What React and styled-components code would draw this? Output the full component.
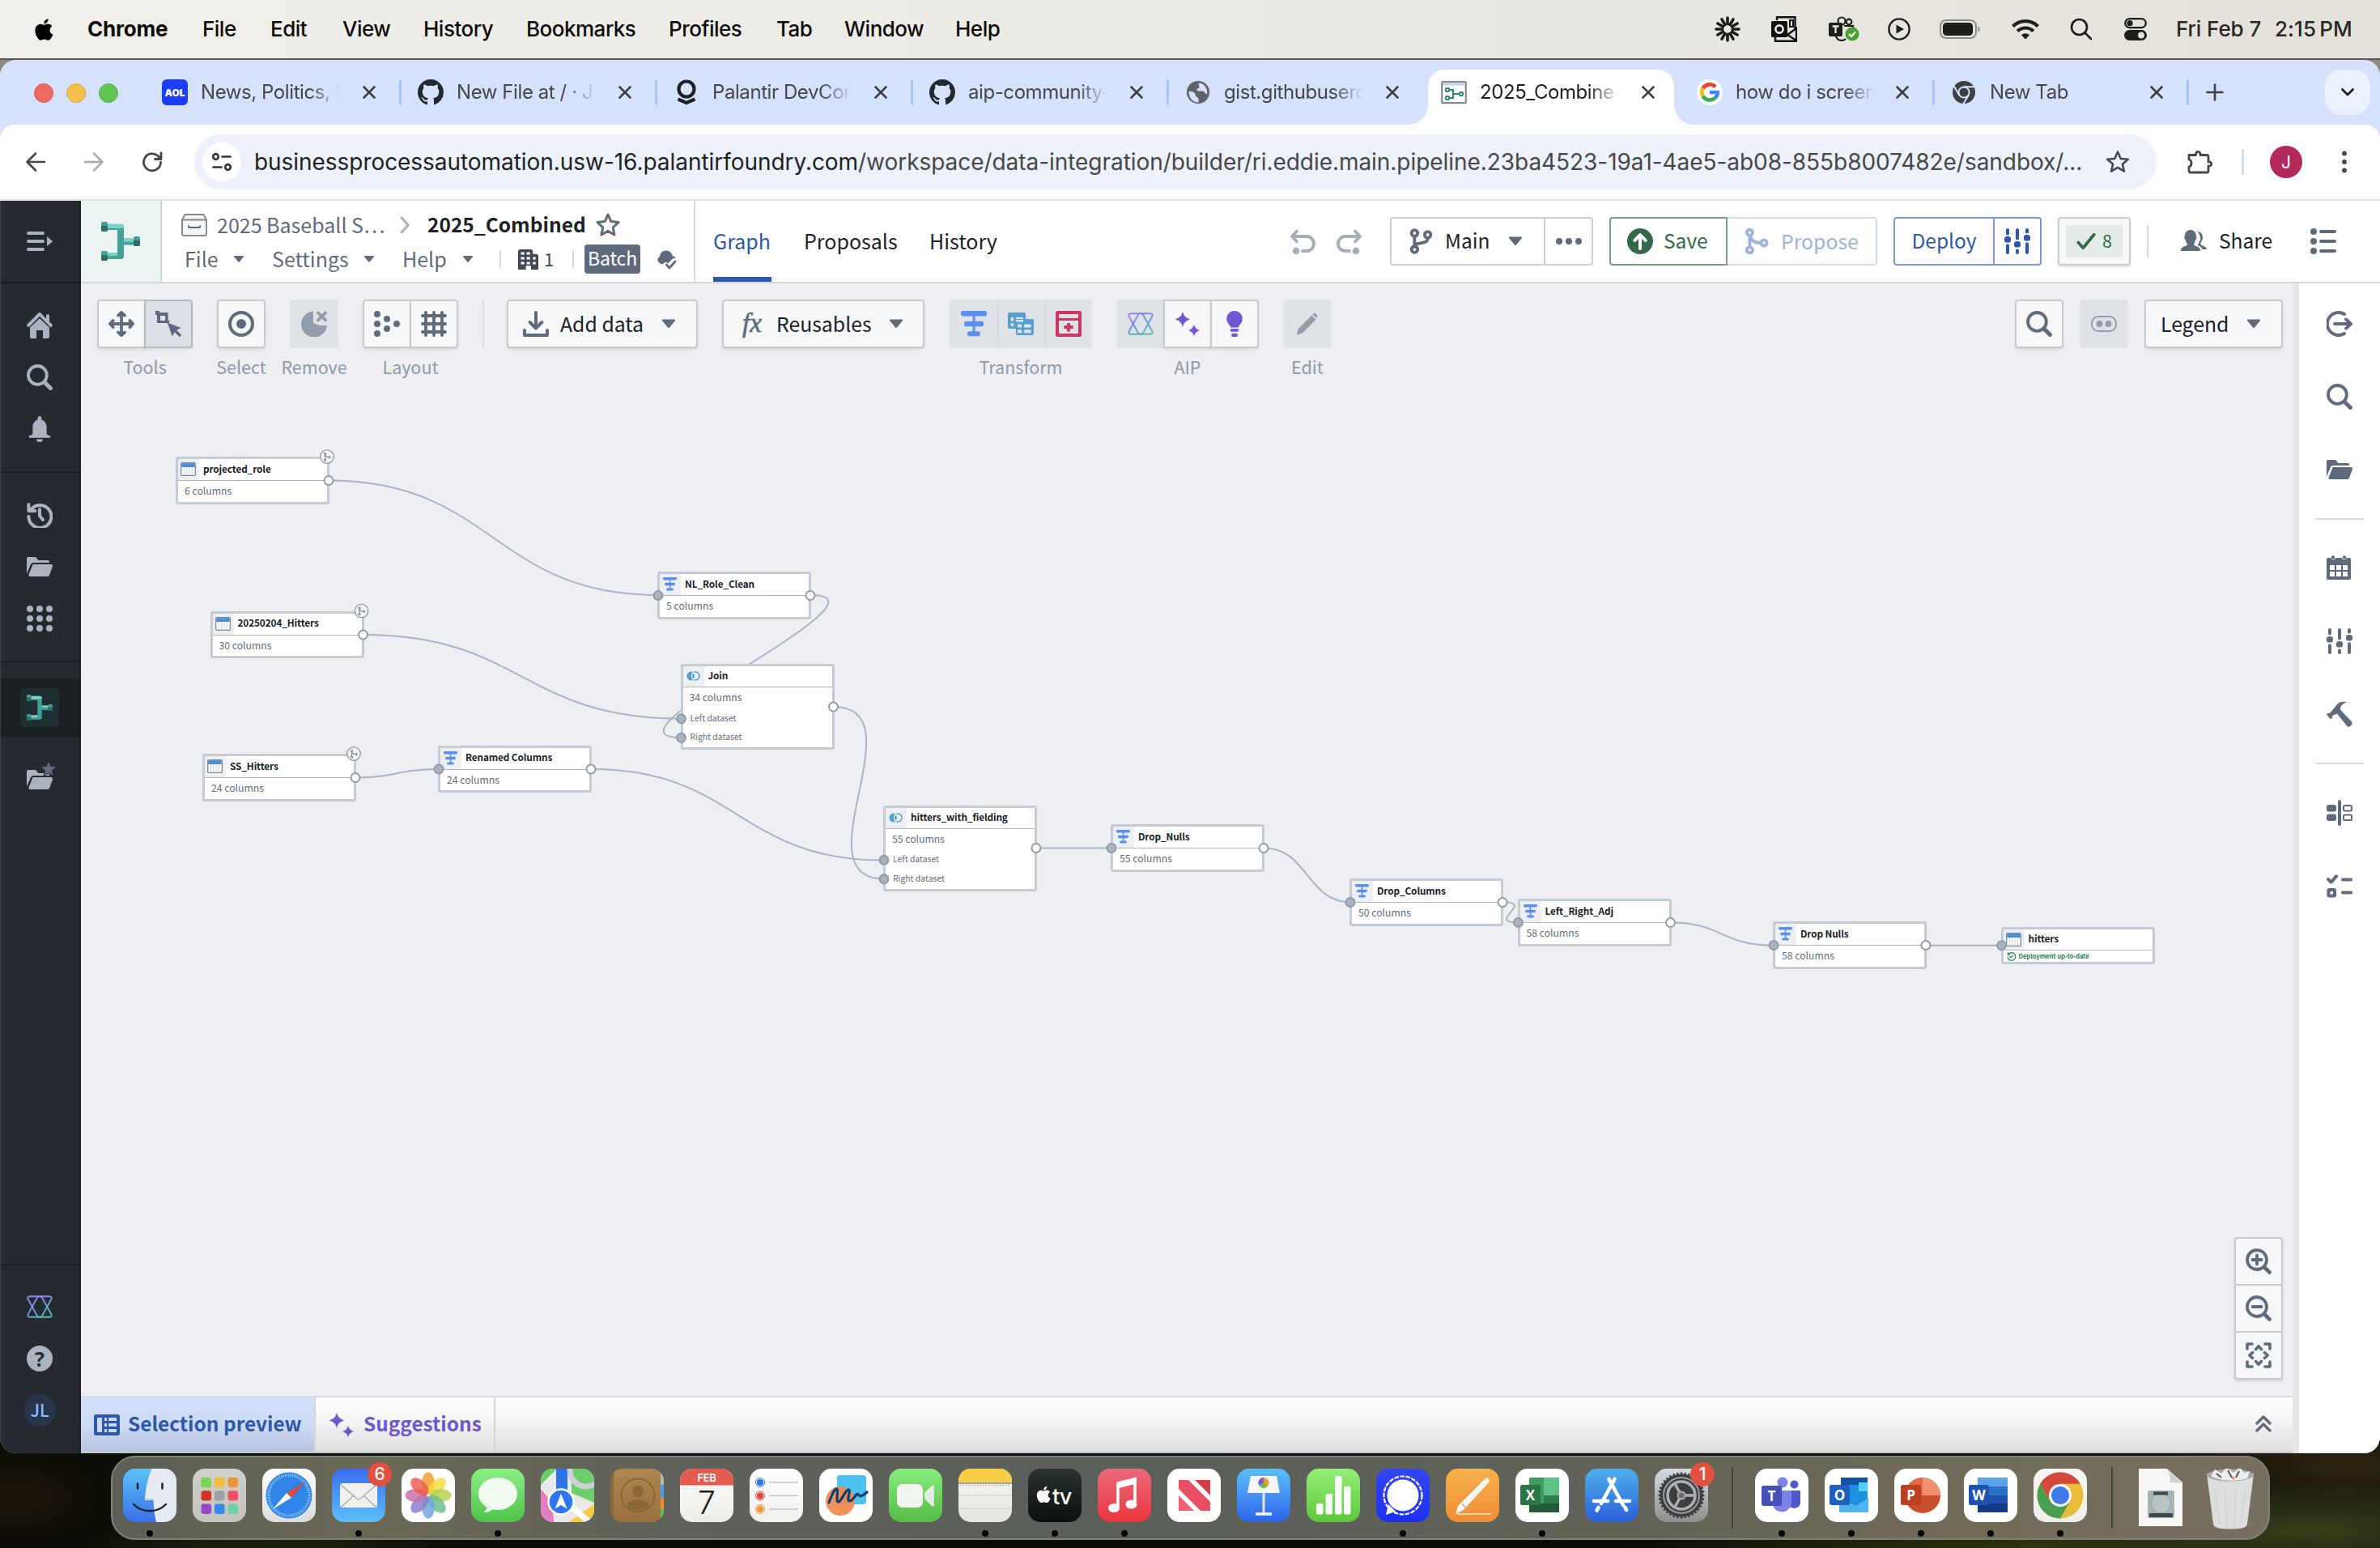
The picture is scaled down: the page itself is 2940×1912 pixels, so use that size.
import React from "react";
import styled, { createGlobalStyle, css } from "styled-components";

const UI = `"Noto Sans CJK JP", "Noto Sans", sans-serif`;
const MAC = `Inter, Roboto, sans-serif`;

const Global = createGlobalStyle`
  *, *::before, *::after { box-sizing: border-box; }
  html, body { margin: 0; padding: 0; background: #0c0e08; }
  body { width: 2940px; height: 1912px; overflow: hidden; font-family: ${UI}; }
  svg { display: block; flex: none; }
`;

/* ---------- layout primitives ---------- */
const Desktop = styled.div`
  width: 2940px;
  height: 1912px;
  display: flex;
  flex-direction: column;
  background:
    radial-gradient(ellipse 420px 60px at 2860px 1890px, #363f1c 0%, rgba(54, 63, 28, 0) 100%),
    radial-gradient(ellipse 260px 80px at 2900px 1810px, #2e2412 0%, rgba(46, 36, 18, 0) 100%),
    radial-gradient(ellipse 500px 40px at 2500px 1912px, #33330f 0%, rgba(51, 51, 15, 0) 100%),
    radial-gradient(ellipse 140px 70px at 20px 1850px, #1d1309 0%, rgba(29, 19, 9, 0) 100%),
    radial-gradient(ellipse 260px 40px at 330px 1912px, #1d240d 0%, rgba(29, 36, 13, 0) 100%),
    linear-gradient(#a29a8b 0px, #8a8578 110px, #0c0e08 300px, #0b0d07 1912px);
`;
const Slot = styled.div`
  flex: none;
  width: ${(p) => p.$w}px;
  display: flex;
  align-items: center;
  justify-content: ${(p) => (p.$center ? "center" : "flex-start")};
  white-space: nowrap;
`;
const Label = styled.span`
  white-space: nowrap;
  font-size: ${(p) => p.$size || 24}px;
  font-weight: ${(p) => p.$weight || 400};
  letter-spacing: ${(p) => p.$ls || 0}px;
  color: ${(p) => p.$color || "#1c2127"};
  line-height: 1.3;
  padding-bottom: ${(p) => p.$lift ?? 0.1}em;
`;

/* ---------- menu bar ---------- */
const MenuBar = styled.header`
  flex: none;
  height: 74px;
  padding: 0 0 1px 41px;
  display: flex;
  align-items: center;
  font-family: ${MAC};
  background: linear-gradient(90deg, #f0efe9, #ebeae4 50%, #e4e1da);
  border-bottom: 2px solid #55555a;
`;
const MenuSpacer = styled.div`
  flex: 1;
`;
const MenuText = styled.span`
  font-size: 26px;
  line-height: 34px;
  font-weight: ${(p) => (p.$bold ? 700 : 500)};
  letter-spacing: ${(p) => p.$ls ?? -0.45}px;
  word-spacing: ${(p) => p.$ws || 0}px;
  color: ${(p) => p.$color || "#0c0c0c"};
  white-space: nowrap;
`;

/* ---------- browser ---------- */
const Window = styled.main`
  flex: none;
  height: 1721px;
  display: flex;
  flex-direction: column;
  border-radius: 20px;
  overflow: hidden;
  background: #d6e1fc;
`;
const TabStrip = styled.div`
  flex: none;
  height: 80px;
  display: flex;
  align-items: flex-end;
  padding-left: 42px;
  font-family: ${MAC};
  background: #d6e1fc;
`;
const Lights = styled.div`
  width: 142px;
  height: 80px;
  display: flex;
  align-items: center;
  gap: 16px;
`;
const Light = styled.i`
  width: 24px;
  height: 24px;
  border-radius: 50%;
  margin-top: 1px;
  background: ${(p) => p.$c};
  border: 1px solid ${(p) => p.$b};
`;
const TabCell = styled.div`
  flex: none;
  width: ${(p) => p.$w}px;
  height: 68px;
  display: flex;
  align-items: flex-start;
`;
const TabBody = styled.div`
  position: relative;
  flex: 1;
  height: 68px;
  padding: 0 20px 12px 16px;
  display: flex;
  align-items: center;
  justify-content: space-between;
  border-radius: 20px 20px 0 0;
  ${(p) =>
    p.$active &&
    css`
      background: #fff;
      &::before,
      &::after {
        content: "";
        position: absolute;
        bottom: 0;
        width: 24px;
        height: 24px;
      }
      &::before {
        left: -24px;
        background: radial-gradient(circle at 0 0, transparent 23.5px, #fff 24px);
      }
      &::after {
        right: -24px;
        background: radial-gradient(circle at 100% 0, transparent 23.5px, #fff 24px);
      }
    `}
`;
const TabTitle = styled.div`
  flex: 1;
  margin: 0 10px 0 16px;
  white-space: nowrap;
  font-size: 24px;
  line-height: 32px;
  font-weight: 400;
  letter-spacing: ${(p) => p.$ls ?? -0.42}px;
  color: ${(p) => (p.$active ? "#1f1f1f" : "#45474a")};
  mask-image: linear-gradient(90deg, #000 ${(p) => (p.$fade ? 134 : 190)}px, transparent ${(p) => (p.$fade ? 172 : 191)}px);
`;
const TabSep = styled.i`
  width: 3px;
  height: 32px;
  margin: 12px 4px 0 5px;
  border-radius: 2px;
  background: ${(p) => (p.$hide ? "transparent" : "#a8c5f8")};
`;
const PlusCell = styled.div`
  width: 72px;
  height: 68px;
  padding: 0 0 12px 16px;
  display: flex;
  align-items: center;
`;
const TabSearch = styled.div`
  width: 56px;
  height: 56px;
  margin: 0 12px 12px auto;
  border-radius: 20px;
  background: #ebf1fd;
  display: grid;
  place-items: center;
`;
const Toolbar = styled.div`
  flex: none;
  height: 94px;
  padding: 0 0 0 28px;
  display: flex;
  align-items: center;
  background: #fff;
  border-bottom: 2px solid #e0e1e3;
  border-radius: 18px 18px 0 0;
`;
const UrlPill = styled.div`
  width: 2424px;
  height: 68px;
  border-radius: 34px;
  background: #edf1fa;
  display: flex;
  align-items: center;
  padding-left: 10px;
`;
const SiteInfo = styled.div`
  width: 48px;
  height: 48px;
  border-radius: 50%;
  background: #fff;
  display: grid;
  place-items: center;
`;
const UrlText = styled.div`
  width: 2258px;
  margin: 0 28px 0 16px;
  font-family: ${MAC};
  font-size: 28px;
  line-height: 40px;
  letter-spacing: ${(p) => p.$ls}px;
  color: #474747;
  white-space: nowrap;
  b {
    font-weight: 400;
    color: #1f1f1f;
  }
`;
const Avatar = styled.div`
  width: 40px;
  height: 40px;
  border-radius: 50%;
  background: ${(p) => p.$bg};
  color: ${(p) => p.$fg};
  display: grid;
  place-items: center;
  padding-bottom: ${(p) => p.$lift || 0}px;
  font: ${(p) => p.$weight || 400} ${(p) => p.$size}px/1 ${(p) => p.$ff};
`;
const BarSep = styled.i`
  flex: none;
  width: ${(p) => p.$w || 2}px;
  height: ${(p) => p.$h || 20}px;
  background: ${(p) => p.$c || "#d3d6da"};
`;

/* ---------- foundry shell ---------- */
const Shell = styled.div`
  flex: 1;
  display: flex;
  min-height: 0;
`;
const LeftRail = styled.nav`
  flex: none;
  width: 100px;
  display: flex;
  flex-direction: column;
  background: #252a31;
  border-right: 2px solid #1b1f24;
  border-left: 1px solid #3a3f46;
`;
const RailGroup = styled.div`
  padding: ${(p) => p.$pad ?? "20px 0"};
  display: flex;
  flex-direction: column;
  border-bottom: ${(p) => (p.$line ? "2px solid #1a1d21" : "0")};
  flex: ${(p) => (p.$grow ? 1 : "none")};
`;
const RailItem = styled.div`
  height: ${(p) => p.$h || 64}px;
  display: grid;
  place-items: center;
  padding: 0 1px 1px 0;
  background: ${(p) => (p.$active ? "#1b1f24" : "none")};
  margin-bottom: ${(p) => p.$mb || 0}px;
`;
const ActiveTile = styled.div`
  width: 48px;
  height: 48px;
  border-radius: 4px;
  background: #1e2e31;
  display: grid;
  place-items: center;
`;
const HelpBadge = styled.div`
  width: 32px;
  height: 32px;
  border-radius: 50%;
  background: #abb3bf;
  color: #252a31;
  font: 700 25px/32px "Open Sans", sans-serif;
  text-align: center;
`;
const Content = styled.section`
  flex: 1;
  display: flex;
  flex-direction: column;
  min-width: 0;
`;
const AppHeader = styled.div`
  flex: none;
  height: 102px;
  display: flex;
  background: #fff;
  border-bottom: 2px solid #d3d6dc;
`;
const AppLogo = styled.div`
  width: 100px;
  display: grid;
  place-items: center;
  background: #ebf4f3;
  border-right: 2px solid #bfded9;
`;
const TitleBlock = styled.div`
  width: 659px;
  padding: 10px 0 0 24px;
  border-right: 2px solid #d9dce0;
`;
const TitleRow = styled.div`
  height: 40px;
  margin-bottom: 2px;
  padding-left: ${(p) => p.$pl || 0}px;
  display: flex;
  align-items: center;
`;
const Batch = styled.div`
  width: 72px;
  height: 36px;
  border-radius: 4px;
  background: #5f6b7c;
  display: grid;
  place-items: center;
`;
const NavTabs = styled.div`
  display: flex;
  padding-left: 22px;
`;
const NavTab = styled.div`
  height: 100px;
  margin-right: 40px;
  width: ${(p) => p.$w}px;
  display: flex;
  align-items: center;
  padding-top: 6px;
  border-bottom: 6px solid ${(p) => (p.$active ? "#2d57a8" : "transparent")};
`;
const HeaderActions = styled.div`
  margin-left: auto;
  padding-right: 54px;
  display: flex;
  align-items: center;
`;
const Group = styled.div`
  display: flex;
  margin-right: ${(p) => p.$mr ?? 20}px;
`;
const OutlineButton = styled.div`
  height: 60px;
  width: ${(p) => p.$w}px;
  padding-left: ${(p) => p.$pl || 0}px;
  display: flex;
  align-items: center;
  justify-content: ${(p) => (p.$pl ? "flex-start" : "center")};
  border: 2px solid ${(p) => p.$c};
  border-left-width: ${(p) => (p.$joined ? 0 : 2)}px;
  border-radius: ${(p) => p.$r || "4px"};
`;
const StatusButton = styled.div`
  width: 90px;
  height: 60px;
  border: 2px solid #c9cbcf;
  border-radius: 4px;
  background: #f6f7f9;
  box-shadow: 0 2px 3px rgba(17, 20, 24, 0.1);
  display: grid;
  place-items: center;
`;
const StatusTag = styled.div`
  width: 70px;
  height: 40px;
  border-radius: 4px;
  background: #e4ebe8;
  display: flex;
  align-items: center;
  justify-content: center;
  gap: 8px;
`;

/* ---------- work area ---------- */
const WorkArea = styled.div`
  flex: 1;
  display: flex;
  min-height: 0;
`;
const Main = styled.div`
  flex: 1;
  display: flex;
  flex-direction: column;
  min-width: 0;
`;
const Canvas = styled.div`
  flex: 1;
  position: relative;
  background: #edeff2;
`;
const CanvasBar = styled.div`
  display: flex;
  align-items: flex-start;
  padding: 20px 12px 0 20px;
`;
const ToolGroup = styled.div`
  display: flex;
  flex-direction: column;
  align-items: center;
  flex: none;
  width: ${(p) => p.$w}px;
  margin-right: ${(p) => p.$mr ?? 30}px;
`;
const ToolButtons = styled.div`
  display: flex;
  margin-bottom: 9px;
`;
const ToolButton = styled.div`
  width: ${(p) => p.$w || 60}px;
  height: 60px;
  display: flex;
  align-items: center;
  justify-content: ${(p) => (p.$pl ? "flex-start" : "center")};
  padding-left: ${(p) => p.$pl || 0}px;
  margin-left: ${(p) => (p.$join ? -2 : 0)}px;
  border: 2px solid ${(p) => (p.$off ? "transparent" : p.$pressed ? "#b4b7bd" : "#c8cacd")};
  background: ${(p) => (p.$off ? "#dfe2e7" : p.$pressed ? "#dcdfe5" : "#f6f7f9")};
  border-radius: ${(p) => p.$r || "4px"};
  box-shadow: ${(p) => (p.$off ? "none" : "0 2px 3px rgba(17, 20, 24, 0.1)")};
  ${(p) => p.$offJoin && "border-left: 2px solid #d8dbe1; margin-left: 0;"}
`;
const FxGlyph = styled.span`
  font: italic 400 33px/40px "Liberation Serif", serif;
  color: #5f6b7c;
  -webkit-text-stroke: 0.7px #5f6b7c;
  padding: 0 0 3px 5px;
`;
const Graph = styled.div`
  position: absolute;
  inset: 0;
`;
const EdgeLayer = styled.svg`
  position: absolute;
  inset: 0;
`;
const NodeCard = styled.div`
  position: absolute;
  left: ${(p) => p.$x}px;
  top: ${(p) => p.$y}px;
  width: 190px;
  height: ${(p) => p.$h}px;
  border: 3px solid #c5cbd3;
  border-radius: 3px;
  background: #fff;
`;
const NodeHead = styled.div`
  height: ${(p) => (p.$short ? 26 : 27)}px;
  display: flex;
  align-items: center;
  border-bottom: 1px solid #aeb6c2;
`;
const NodeIcon = styled.div`
  width: 26px;
  height: 100%;
  margin-right: 5px;
  padding: 0 1px 1px 0;
  background: #edeff2;
  display: grid;
  place-items: center;
`;
const NodeBody = styled.div`
  height: 26px;
  padding: 2px 0 0 8px;
  display: flex;
  align-items: center;
`;
const NodePort = styled.div`
  height: 23.6px;
  padding-left: 9px;
  display: flex;
  align-items: center;
`;
const NodeStatus = styled.div`
  height: 14px;
  padding: 1px 0 0 4px;
  display: flex;
  align-items: center;
  gap: 4px;
`;
const ZoomStack = styled.div`
  position: absolute;
  right: 12px;
  bottom: 20px;
  width: 60px;
  border: 2px solid #c8cacd;
  border-radius: 4px;
  background: #f6f7f9;
  box-shadow: 0 2px 3px rgba(17, 20, 24, 0.12);
`;
const ZoomCell = styled.div`
  height: 56px;
  display: grid;
  place-items: center;
  & + & {
    height: 58px;
    border-top: 2px solid #c8cacd;
  }
`;
const BottomBar = styled.div`
  flex: none;
  height: 71px;
  display: flex;
  border-top: 2px solid #d9dce1;
  border-bottom: 2px solid #c4c7cc;
  background: linear-gradient(#fefefe, #f4f4f4 45%, #dedede);
`;
const BottomTab = styled.div`
  width: ${(p) => p.$w}px;
  padding-left: 16px;
  display: flex;
  align-items: center;
  gap: ${(p) => p.$gap}px;
  border-right: 2px solid #d3d5da;
  background: ${(p) => (p.$active ? "linear-gradient(#d1e0fb, #cddbf5 50%, #b7c5de)" : "none")};
`;
const Collapse = styled.div`
  margin: 0 24px 0 auto;
  padding-bottom: 3px;
  display: flex;
  align-items: center;
`;
const Gutter = styled.i`
  flex: none;
  width: 8px;
  background: #e2e6eb;
`;
const RightRail = styled.aside`
  flex: none;
  width: 100px;
  padding-top: 5px;
  background: #fff;
  display: flex;
  flex-direction: column;
  align-items: center;
`;
const RightItem = styled.div`
  height: 90px;
  display: grid;
  place-items: center;
`;
const RightLine = styled.i`
  width: 60px;
  height: 2px;
  margin: 15px 0;
  background: #dcdcde;
`;

/* ---------- dock ---------- */
const DockBar = styled.footer`
  flex: none;
  width: 2667px;
  height: 104px;
  margin: 3px 0 0 137px;
  padding: 14px 0 0 13px;
  display: flex;
  align-items: flex-start;
  border-radius: 30px;
  border: 2px solid #7d8076;
  background: linear-gradient(90deg, #5c5f55, #6b6857 12%, #5d615a 28%, #5a5f58 50%, #626358 70%, #706a59 85%, #777060);
`;
const DockItem = styled.div`
  position: relative;
  flex: none;
  width: 66px;
  margin-right: ${(p) => p.$mr ?? 20}px;
  display: flex;
  flex-direction: column;
  align-items: center;
`;
const DockDot = styled.i`
  width: 8px;
  height: 8px;
  margin-top: 10px;
  border-radius: 50%;
  background: #000;
`;
const DockBadge = styled.span`
  position: absolute;
  right: -8px;
  top: -8px;
  width: 30px;
  height: 30px;
  border-radius: 50%;
  background: #e2503f;
  color: #fff;
  font: 500 21px/30px ${MAC};
  text-align: center;
`;
const DockSep = styled.i`
  flex: none;
  width: 2px;
  height: 76px;
  margin: -2px ${(p) => p.$mr}px 0 ${(p) => p.$ml}px;
  background: #45443a;
`;

/* ---------- icons on a 16 unit grid ---------- */
const Ic = ({ s = 32, c = "#5f6b7c", children, vb = "0 0 16 16", w, h }) => (
  <svg width={w || s} height={h || s} viewBox={vb} fill={c} stroke="none">
    {children}
  </svg>
);
const St = ({ w = 2, c = "#5f6b7c", children, s, vb, ww, hh }) => (
  <Ic s={s} vb={vb} w={ww} h={hh} c="none">
    <g stroke={c} strokeWidth={w} strokeLinecap="round" strokeLinejoin="round" fill="none">
      {children}
    </g>
  </Ic>
);
const Caret = ({ c, small }) => (
  <Ic c={c} vb="-16 -16 32 32">
    <path d="M-7-5.500h14c1 0 1.400 1 .8 1.700L1 4.600a1.400 1.400 0 0 1-2 0L-7.800-3.800c-.6-.7-.2-1.700.8-1.700z" transform={small ? "scale(.74)" : "scale(1)"} />
  </Ic>
);
const SearchIcon = ({ c, s }) => (
  <St c={c} s={s} w={1.9}>
    <circle cx="6.700" cy="6.700" r="5.700" />
    <path d="M11.200 11.200l3.500 3.500" strokeWidth="2.500" />
  </St>
);
const Folder = ({ c }) => (
  <Ic c={c}>
    <path d="M0 12.300V3c0-.55.45-1 1-1h4c.3 0 .6.1.8.3L7.200 4H13c.55 0 1 .45 1 1v.5H4.200c-.8 0-1.500.5-1.800 1.200L0 12.300zM15 6.500H4.500c-.5 0-.9.300-1 .7L1.200 13c-.1.600.3 1 .9 1h10.900c.500 0 .900-.300 1-.700l2-5.600c.100-.600-.400-1.200-1-1.200z" />
  </Ic>
);
const Sliders = ({ c, s }) => (
  <Ic c={c} s={s}>
    <rect x="1" y="0" width="2" height="4.200" rx="1" /><rect x="0" y="5" width="4" height="3.800" rx="1.600" /><rect x="1" y="9.600" width="2" height="6.400" rx="1" />
    <rect x="7" y="0" width="2" height="7.200" rx="1" /><rect x="6" y="8" width="4" height="3.800" rx="1.600" /><rect x="7" y="12.700" width="2" height="3.300" rx="1" />
    <rect x="13" y="0" width="2" height="3.200" rx="1" /><rect x="12" y="4" width="4" height="3.800" rx="1.600" /><rect x="13" y="8.600" width="2" height="7.400" rx="1" />
  </Ic>
);
const Pipeline = ({ s = 48 }) => (
  <Ic s={s} vb="0 0 48 48" c="#43a196">
    <path d="M4 3h20a4 4 0 0 1 4 4v35a4 4 0 0 1-4 4H4v-7h16V10H4z" />
    <path d="M8 2.500h17a3 3 0 0 1 3 3V8H8zM8 38h12v4H8zM28 20h12v4.500H28z" fill="#7dd1c5" />
    <path d="M28 24.500h12V28.500H28z" />
    <rect width="8" height="12" rx="2" /><path d="M0 5h8v5a2 2 0 0 1-2 2H2a2 2 0 0 1-2-2z" fill="#2f6f68" />
    <rect y="36" width="8" height="12" rx="2" /><path d="M0 41h8v5a2 2 0 0 1-2 2H2a2 2 0 0 1-2-2z" fill="#2f6f68" />
    <rect x="40" y="18" width="8" height="12" rx="2" /><path d="M40 23h8v5a2 2 0 0 1-2 2h-4a2 2 0 0 1-2-2z" fill="#2f6f68" />
  </Ic>
);
const Aip = ({ dark }) => (
  <svg width="32" height="28" viewBox="0 0 32 28">
    <defs>
      <linearGradient id={dark ? "aipD" : "aipL"} gradientUnits="userSpaceOnUse" x1="6" y1="0" x2="24" y2="28">
        <stop offset="0" stopColor="#9b84f0" />
        <stop offset=".5" stopColor="#6f94dd" />
        <stop offset="1" stopColor="#4fc2a8" />
      </linearGradient>
    </defs>
    <g fill="none" stroke={`url(#${dark ? "aipD" : "aipL"})`} strokeWidth="1.900" strokeLinejoin="round">
      <path d="M4 1.200h24c2.300 0 3.400 1.700 2.300 3.600L19.200 25c-1.400 2.400-5 2.400-6.400 0L1.700 4.800C.6 2.900 1.700 1.200 4 1.200z" />
      <path d="M4 26.800h24c2.300 0 3.400-1.700 2.300-3.600L19.200 3c-1.400-2.400-5-2.400-6.400 0L1.700 23.200c-1.100 1.900 0 3.600 2.300 3.600z" />
    </g>
  </svg>
);
const Sparkle = ({ c = "#7157d1" }) => (
  <Ic c={c}>
    <path d="M5 .3c.5 2.600 1.700 4 4.600 4.900C6.700 6.100 5.500 7.500 5 10.100 4.500 7.500 3.300 6.100.3 5.200 3.300 4.300 4.500 2.900 5 .3z" />
    <path d="M12 8.200c.4 2 1.400 3.100 3.700 3.800-2.300.7-3.300 1.800-3.700 3.800-.4-2-1.400-3.100-3.700-3.800 2.300-.7 3.300-1.800 3.700-3.800z" />
  </Ic>
);
const TransformIcon = ({ s = 32 }) => (
  <Ic s={s} c="#5a8ff0">
    <rect x="0" y="0" width="16" height="3.200" rx="1.300" /><rect x="2" y="6.400" width="12" height="3.200" rx="1.300" />
    <rect x="4" y="12.600" width="8" height="3" rx="1.300" /><rect x="7.300" y="1" width="1.500" height="13" />
  </Ic>
);
const TableIcon = () => (
  <svg width="19" height="17" viewBox="0 0 19 17">
    <rect x=".7" y=".7" width="17.600" height="15.600" rx="1" fill="#fff" stroke="#7d8590" strokeWidth="1.300" />
    <rect x="1.300" y="1.200" width="16.400" height="4.800" fill="#4690d6" />
    <path d="M4.700 6v10M7.900 6v10M11.100 6v10M14.300 6v10" stroke="#c3ccd6" strokeWidth=".9" />
  </svg>
);
const JoinIcon = () => (
  <svg width="17" height="12" viewBox="0 0 17 12">
    <circle cx="6" cy="6" r="5.500" fill="#4f9fd3" />
    <circle cx="11" cy="6" r="5" fill="#edeff2" stroke="#4f9fd3" strokeWidth="1.500" />
    <path d="M8.500 1.300a6.500 6.500 0 0 1 0 9.400 6.500 6.500 0 0 1 0-9.400z" fill="#4f9fd3" stroke="#edeff2" strokeWidth="1.200" />
  </svg>
);
const Apple = ({ s = 30, c = "#000" }) => (
  <svg width={s * 0.87} height={s} viewBox="0 0 27 32" fill={c}>
    <path d="M22.500 17c0-3.300 2.700-4.900 2.800-5-1.500-2.200-3.900-2.500-4.700-2.600-2-.2-3.900 1.200-4.900 1.200s-2.600-1.200-4.200-1.100c-2.200 0-4.200 1.300-5.300 3.200-2.300 3.900-.6 9.700 1.600 12.900 1.100 1.600 2.400 3.300 4.100 3.200 1.600-.1 2.300-1.100 4.200-1.100s2.500 1.100 4.300 1c1.800 0 2.900-1.600 4-3.100 1.300-1.800 1.800-3.600 1.800-3.700-.1 0-3.700-1.400-3.700-4.900zM19.300 7.500c.9-1.100 1.500-2.600 1.300-4.100-1.300.1-2.800.9-3.700 1.900-.8.900-1.500 2.500-1.300 3.900 1.400.1 2.800-.7 3.700-1.700z" transform="translate(-3.500 -1.300) scale(1.110)" />
  </svg>
);
const Cross = () => (
  <St s={24} c="#3c3f43" w={2.6} vb="0 0 24 24"><path d="M5.500 5.500l13 13M18.500 5.500l-13 13" /></St>
);
const Github = () => (
  <Ic c="#24292f">
    <path d="M8 0C3.580 0 0 3.580 0 8c0 3.540 2.290 6.530 5.470 7.590.4.070.55-.17.55-.38 0-.19-.01-.82-.01-1.490-2.010.37-2.530-.49-2.690-.94-.09-.23-.48-.94-.82-1.130-.28-.15-.68-.52-.01-.53.63-.01 1.080.58 1.230.82.72 1.210 1.870.87 2.330.66.07-.52.28-.87.51-1.070-1.780-.2-3.640-.89-3.640-3.950 0-.87.31-1.590.82-2.150-.08-.2-.36-1.020.08-2.120 0 0 .67-.21 2.200.82.64-.18 1.320-.27 2-.27s1.360.09 2 .27c1.530-1.040 2.200-.82 2.200-.82.44 1.100.16 1.920.08 2.120.51.56.82 1.270.82 2.150 0 3.070-1.870 3.750-3.650 3.950.29.25.54.73.54 1.480 0 1.070-.01 1.930-.01 2.200 0 .21.15.46.55.38A8.010 8.010 0 0 0 16 8c0-4.420-3.580-8-8-8z" />
  </Ic>
);
const Branch = ({ c }) => (
  <St c={c} w={1.9}>
    <circle cx="4.200" cy="3" r="1.900" /><circle cx="4.200" cy="13" r="1.900" /><circle cx="12.300" cy="4" r="1.900" />
    <path d="M4.200 5v6M12.300 6c0 2.600-2 2.800-4 3.100-2 .3-4 .4-4 2.400" />
  </St>
);
const Merge = ({ c, w = 1.9, s }) => (
  <St c={c} w={w} s={s}>
    <circle cx="4.200" cy="2.600" r="1.800" /><circle cx="4.200" cy="13.400" r="1.800" /><circle cx="13" cy="9" r="1.800" />
    <path d="M4.200 4.500v7M4.500 5c.6 2.600 2.500 4 6.600 4" />
  </St>
);

const tabs = [
  { t: "News, Politics, S", fade: true, icon: (
    <svg width="32" height="32"><rect width="32" height="32" rx="6" fill="#1a3df5" /><text x="16" y="20.500" textAnchor="middle" fontFamily="Inter" fontWeight="900" fontSize="12" fill="#fff">AOL</text></svg>
  ) },
  { t: "New File at / · J", fade: true, icon: <Github /> },
  { t: "Palantir DevCor", fade: true, icon: (
    <St s={32} c="#1e2124" w={4.2} vb="0 0 32 32"><circle cx="16" cy="12" r="9.500" /><path d="M5.500 24.500L16 29l10.500-4.500" strokeLinecap="butt" strokeLinejoin="miter" /></St>
  ) },
  { t: "aip-community-", fade: true, icon: <Github /> },
  { t: "gist.githubuserc", fade: true, icon: (
    <svg width="32" height="32" viewBox="0 0 32 32"><circle cx="16" cy="16" r="14" fill="#5f6368" /><path d="M4.500 14.500c4 .5 8 1 8 4.500 0 3 4 2.500 4 5.500v4c-6 .5-12.500-5-12-14zM17 4.500c-1 3 1 3.500.5 5.500-.5 1.500-3 1-3 3s4 1.500 7 1.500 2 3.500 5.500 3.500c1.500-7-4-13.500-10-13.500z" fill="#d6e1fc" /></svg>
  ) },
  { t: "2025_Combine", fade: true, active: true, icon: (
    <svg width="32" height="32" viewBox="0 0 32 32"><rect x="1.200" y="3.200" width="29.600" height="26" rx="1.500" fill="#fff" stroke="#858a8f" strokeWidth="2.200" /><path d="M2 4.500h28v3H2z" fill="#c9d4da" /><g fill="none" stroke="#2f8478" strokeWidth="2"><rect x="6" y="11" width="4" height="4" rx="1" /><rect x="6" y="21" width="4" height="4" rx="1" /><rect x="23" y="16" width="4" height="4" rx="1" /><path d="M10 13h5v10h-5M15 18h8" /></g></svg>
  ) },
  { t: "how do i screen", fade: true, w: 314, icon: (
    <svg width="32" height="32" viewBox="0 0 32 32"><circle cx="16" cy="16" r="16" fill="#fff" /><g fill="none" strokeWidth="4.600"><path d="M23 9.300A9.700 9.700 0 0 0 7.600 11.200" stroke="#ea4335" /><path d="M7.600 11.200a9.700 9.700 0 0 0 0 9.600" stroke="#fbbc05" /><path d="M7.600 20.800A9.700 9.700 0 0 0 22.500 23" stroke="#34a853" /><path d="M22.500 23.100c2.200-1.900 3.200-4.200 3.200-7.100h-9.700" stroke="#4285f4" /></g></svg>
  ) },
  { t: "New Tab", w: 314, icon: (
    <svg width="32" height="32" viewBox="0 0 32 32"><circle cx="16" cy="16" r="14" fill="#3c4043" /><circle cx="16" cy="16" r="6.600" fill="none" stroke="#d6e1fc" strokeWidth="2" /><path d="M16 9.300h13M10.300 19.500L3.800 8.500M21.700 19.500L15.200 30.500" stroke="#d6e1fc" strokeWidth="2" /></svg>
  ) },
];

const nodes = [
  { x: 217, y: 564, t: "projected_role", c: "6 columns", k: "table", tag: 1, out: 1 },
  { x: 812, y: 706, t: "NL_Role_Clean", c: "5 columns", k: "tr", in: 1, out: 1 },
  { x: 259.5, y: 754.5, t: "20250204_Hitters", c: "30 columns", k: "table", tag: 1, out: 1 },
  { x: 840.5, y: 820, t: "Join", c: "34 columns", k: "join" },
  { x: 250, y: 931, t: "SS_Hitters", c: "24 columns", k: "table", tag: 1, out: 1 },
  { x: 541, y: 920.5, t: "Renamed Columns", c: "24 columns", k: "tr", in: 1, out: 1 },
  { x: 1091, y: 994.5, t: "hitters_with_fielding", c: "55 columns", k: "join" },
  { x: 1372, y: 1018, t: "Drop_Nulls", c: "55 columns", k: "tr", in: 1, out: 1 },
  { x: 1667, y: 1085, t: "Drop_Columns", c: "50 columns", k: "tr", in: 1, out: 1 },
  { x: 1874.5, y: 1110, t: "Left_Right_Adj", c: "58 columns", k: "tr", in: 1, out: 1 },
  { x: 2190, y: 1138, t: "Drop Nulls", c: "58 columns", k: "tr", in: 1, out: 1 },
  { x: 2471.5, y: 1145, t: "hitters", k: "out", in: 1 },
];
const edges = [
  [406, 593.5, 813, 735, 203], [448, 784, 842, 887.7, 197], [1001, 735, 842, 911.3, 118],
  [439, 960.5, 542, 950, 51], [730, 950, 1092, 1062.6, 181], [1030, 873, 1092, 1085.6, 106],
  [1280, 1047.4, 1373, 1047.4, 40], [1562, 1047.4, 1668, 1114.3, 53], [1856, 1114.3, 1876, 1139.5, 42],
  [2064, 1139.5, 2190, 1167.7, 63], [2379, 1167.7, 2473, 1167.7, 40],
];
const ports = [];
nodes.forEach((n) => {
  const join = n.k === "join";
  const my = n.k === "out" ? n.y + 22.7 : n.y + 29.5;
  if (join) {
    ports.push([n.x + 189, n.y + 53, 0], [n.x + 1, n.y + 67.7, 1], [n.x + 1, n.y + 91.3, 1]);
  } else {
    if (n.out) ports.push([n.x + 189, my, 0]);
    if (n.in) ports.push([n.x + 1, my, 1]);
  }
});

const GraphView = () => (
  <Graph>
    <EdgeLayer width="2732" height="1373" viewBox="100 350 2732 1373">
      {edges.map(([a, b, c, d, k]) => (
        <path key={a} d={`M${a} ${b}C${a + k} ${b} ${c - k} ${d} ${c} ${d}`} fill="none" stroke="#abb3bf" strokeWidth="2" />
      ))}
    </EdgeLayer>
    {nodes.map((n) => (
      <NodeCard key={n.x} $x={n.x - 100} $y={n.y - 350} $h={n.k === "join" ? 106 : n.k === "out" ? 46 : 58.5}>
        <NodeHead $short={n.k === "join" || n.k === "out"}>
          <NodeIcon>
            {n.k === "tr" ? <TransformIcon s={17} /> : n.k === "join" ? <JoinIcon /> : <TableIcon />}
          </NodeIcon>
          <Label $size={11.8} $weight={700} $color="#1c2127" $ls={-0.12} $lift={0.28}>{n.t}</Label>
        </NodeHead>
        {n.k === "out" ? (
          <NodeStatus>
            <St s={11} c="#238551" w={1.8}><path d="M3 3.500A7 7 0 1 1 1.500 9M2 1v3.500h3.500M5.500 8l2 2 3-4" /></St>
            <Label $size={7.8} $weight={700} $color="#238551" $ls={-0.12}>Deployment up-to-date</Label>
          </NodeStatus>
        ) : (
          <NodeBody><Label $size={12.2} $color="#5f6b7c">{n.c}</Label></NodeBody>
        )}
        {n.k === "join" && (
          <>
            <NodePort><Label $size={10.4} $color="#5f6b7c">Left dataset</Label></NodePort>
            <NodePort><Label $size={10.4} $color="#5f6b7c">Right dataset</Label></NodePort>
          </>
        )}
      </NodeCard>
    ))}
    <EdgeLayer width="2732" height="1373" viewBox="100 350 2732 1373">
      {ports.map(([x, y, f]) => (
        <circle key={`${x}-${y}`} cx={x} cy={y} r="5.500" fill={f ? "#abb3bf" : "#fff"} stroke="#8f99a8" strokeWidth="1.900" />
      ))}
      {nodes.filter((n) => n.tag).map((n) => (
        <g key={n.x} transform={`translate(${n.x + 187} ${n.y})`} fill="none" stroke="#7d8796" strokeWidth="1.100">
          <circle r="8.300" fill="#f3f4f6" />
          <circle cx="-2.500" cy="-3.500" r="1.100" /><circle cx="-2.500" cy="4" r="1.100" /><circle cx="3" cy=".7" r="1.100" />
          <path d="M-2.500-2.400v5.300M-2.300-2c.5 1.600 1.600 2.600 4.200 2.700" />
        </g>
      ))}
    </EdgeLayer>
  </Graph>
);

/* ---------- dock artwork ---------- */
const Tile = ({ id, a, b, children }) => (
  <svg width="66" height="66" viewBox="0 0 66 66">
    <defs>
      <linearGradient id={id} x1="0" y1="0" x2="0" y2="1"><stop offset="0" stopColor={a} /><stop offset="1" stopColor={b || a} /></linearGradient>
      <clipPath id={`${id}c`}><rect width="66" height="66" rx="15" /></clipPath>
    </defs>
    <g clipPath={`url(#${id}c)`}>
      <rect width="66" height="66" fill={`url(#${id})`} />
      {children}
    </g>
  </svg>
);
const OfficeLetter = ({ c, t }) => (
  <>
    <rect x="6" y="20" width="25" height="25" rx="2.500" fill={c} />
    <text x="18.500" y="39" textAnchor="middle" fontFamily="Open Sans" fontWeight="700" fontSize="17" fill="#fff">{t}</text>
  </>
);
const petals = ["#f39a2d", "#f3dc3b", "#b5d24a", "#6bbf8a", "#6aa5df", "#8a79c4", "#c66fa8", "#ee5a4a"];
const gear = Array.from({ length: 36 }, (_, i) => i * 10);

const dock = [
  [<Tile id="finder" a="#5cc3f7" b="#3b6fe8"><path d="M36 0c-5 12-8 24-8.500 37.500h10C37.500 48 39 58 41 66h25V0z" fill="#e6ebf2" /><path d="M18 18.500v6M48.500 18.500v6" stroke="#1d2630" strokeWidth="2.600" strokeLinecap="round" /><path d="M36 0c-5 12-8 24-8.500 38.500h10" fill="none" stroke="#dfe5ee" strokeWidth="1" /><path d="M13 44c11 11 29 11 40 0" fill="none" stroke="#16202b" strokeWidth="2.400" strokeLinecap="round" /></Tile>, 1],
  [<Tile id="launch" a="#cfcfcb" b="#c4c3bd">{["#77d64f", "#f5bd39", "#ee9635", "#cf3428", "#9aa2a6", "#ef5067", "#9746c5", "#3488ef", "#6ccfa2"].map((c, i) => <rect key={c} x={10.5 + (i % 3) * 16.5} y={11 + Math.floor(i / 3) * 16.3} width="12.500" height="12.300" rx="3" fill={c} />)}</Tile>],
  [<Tile id="safari" a="#ffffff" b="#dcdcdc"><circle cx="33" cy="33" r="28.500" fill="#2f86e8" /><circle cx="33" cy="33" r="25" fill="none" stroke="#bfe0fa" strokeWidth="3.500" strokeDasharray=".7 1.500" /><path d="M54 16L30 30l6 6z" fill="#e5473c" /><path d="M13 50l17-20 6 6z" fill="#f4f4f4" /></Tile>],
  [<Tile id="mail" a="#3a6df0" b="#5cc0f8"><rect x="10" y="18" width="46" height="30" rx="3.500" fill="#f0f0ef" /><path d="M11 20l20 17c1.500 1.200 2.500 1.200 4 0l20-17M12 47l15-14M54 47L39 33" fill="none" stroke="#a9a9a9" strokeWidth="1.400" /></Tile>, 1, "6"],
  [<Tile id="photos" a="#fdfdfd">{petals.map((c, i) => <ellipse key={c} cx="33" cy="18" rx="8" ry="13.500" fill={c} opacity=".82" transform={`rotate(${i * 45} 33 33)`} />)}</Tile>],
  [<Tile id="messages" a="#8bef84" b="#4fc24a"><ellipse cx="33" cy="31" rx="24" ry="20" fill="#f1fbf0" /><path d="M20 44c0 5-2 8-5 10 6 0 10-2 13-5z" fill="#e8f6e6" /></Tile>, 1],
  [<Tile id="maps" a="#e9e9ec"><path d="M0 0h20L0 20zM38 0h28v42L38 30z" fill="#6dcf6c" /><path d="M0 26c10 8 16 22 16 40H0z" fill="#e17fc0" /><path d="M66 44L34 66h32z" fill="#f5cb41" /><path d="M19 0h14v34H19z" fill="#2f73e8" /><path d="M28 34l38 32h-12L24 40z" fill="#fff" /><circle cx="56" cy="2" r="20" fill="none" stroke="#d0d1d8" strokeWidth="7" /><circle cx="25" cy="41" r="15.500" fill="#2f76ee" stroke="#fff" strokeWidth="2.400" /><path d="M25 31l7.500 18.500L25 45l-7.500 4.500z" fill="#fff" /></Tile>],
  [<Tile id="contacts" a="#ad8650" b="#9a7040"><rect x="62" width="4" height="66" fill="#b9b9b4" /><rect x="62" y="20" width="4" height="16" fill="#4d9be8" /><rect x="62" y="36" width="4" height="14" fill="#ef8a2f" /><rect x="62" y="50" width="4" height="16" fill="#5cbf5a" /><g fill="none" stroke="#80602f" strokeWidth="1.600"><circle cx="34" cy="33" r="20.500" /></g><circle cx="34" cy="28" r="7.500" fill="#8a6735" /><path d="M20 46c2-11 26-11 28 0a20 20 0 0 1-28 0z" fill="#8a6735" /><rect width="4" height="66" fill="#8d6839" /></Tile>],
  [<Tile id="cal" a="#fbfbfa" b="#eeede9"><rect width="66" height="20.500" fill="#e45c4f" /><text x="33" y="16" textAnchor="middle" fontFamily="Inter" fontWeight="600" fontSize="13" fill="#fff" letterSpacing="-.3">FEB</text><text x="33" y="55.500" textAnchor="middle" fontFamily="Inter" fontWeight="300" fontSize="39" fill="#1e1e1e">7</text></Tile>],
  [<Tile id="remind" a="#ffffff" b="#f1f0ee">{["#2f76ee", "#e5473c", "#f0942c"].map((c, i) => <g key={c}><circle cx="13" cy={17 + i * 16.5} r="4" fill={c} /><circle cx="13" cy={17 + i * 16.5} r="5.500" fill="none" stroke={c} strokeWidth="1" /><path d={`M24 ${17 + i * 16.5}h36`} stroke="#c4c4c4" strokeWidth="1.600" /></g>)}</Tile>],
  [<Tile id="free" a="#ffffff"><rect x="22" y="8" width="36" height="36" rx="4" fill="#4cc3f2" /><circle cx="26" cy="40" r="18" fill="#f08a4e" opacity=".92" /><path d="M12 42c3-8 6-16 9-17 4-1-2 17 3 16 4-1 8-15 12-15 4 1-3 13 1 14 4 0 6-5 9-8 2-2 3 2 5 2 3-1 5-2 8-5" fill="none" stroke="#143d6b" strokeWidth="3.200" strokeLinecap="round" /></Tile>],
  [<Tile id="facetime" a="#86ec7c" b="#58bb48"><rect x="10" y="19" width="32" height="29" rx="7" fill="#f1f5f0" /><path d="M44 30l9-9c1.500-1.300 2.800-.6 2.800 1v23c0 1.600-1.300 2.300-2.800 1l-9-9z" fill="#e4ede2" /></Tile>],
  [<Tile id="notes" a="#f8f7f4" b="#e6e4e0"><rect width="66" height="17" fill="#f7cf45" /><path d="M0 18h66" stroke="#8e8a80" strokeWidth="1.600" /><path d="M2 20.500h62" stroke="#b0ada5" strokeWidth="1.600" strokeDasharray="1.500 2" /><path d="M0 33h66M0 49.500h66" stroke="#d4d3cf" strokeWidth="1.500" /></Tile>, 1],
  [<Tile id="tv" a="#283430" b="#0b0f10"><g transform="translate(9 20)"><Apple s={23} c="#fff" /></g><text x="30" y="43.500" fontFamily="Inter" fontWeight="500" fontSize="27" letterSpacing="-1" fill="#fff">tv</text></Tile>, 1],
  [<Tile id="music" a="#ea6b7d" b="#e8363f"><path d="M25 19.500L46 14v27.500" fill="none" stroke="#fff" strokeWidth="3.600" /><path d="M23.500 16.500L48 10.500v8l-24.500 6z" fill="#fff" /><path d="M25 18v30" stroke="#fff" strokeWidth="3.600" /><ellipse cx="20" cy="48.500" rx="7" ry="5.500" fill="#fff" /><ellipse cx="41.500" cy="44" rx="7" ry="5.500" fill="#fff" /></Tile>, 1],
  [<Tile id="news" a="#ffffff"><path d="M14 14h12l27 27v11H41L14 25z" fill="#e94f63" /><path d="M34 14h19v19z" fill="#d83b4c" /><path d="M14 33v19h19z" fill="#ef6073" /></Tile>],
  [<Tile id="keynote" a="#5bc0f8" b="#2f63e8"><path d="M17 9h32l4 21H13z" fill="#f3f5f7" /><circle cx="33" cy="17.500" r="6.500" fill="#f39a2d" /><path d="M33 11a6.500 6.500 0 0 0-5.500 10l5.500-3.500z" fill="#7a5cd0" /><path d="M27.500 21a6.500 6.500 0 0 0 10 1l-4.500-4.500z" fill="#5cbf5a" /><path d="M33 30v25" stroke="#dfe6ef" strokeWidth="3" /><path d="M23 56h20" stroke="#f3f5f7" strokeWidth="3.500" /></Tile>],
  [<Tile id="numbers" a="#95ef78" b="#5bc83c"><g fill="#f8fff4"><rect x="12" y="43" width="8.500" height="13.500" rx="2" /><rect x="23.500" y="31" width="8.500" height="25.500" rx="2" /><rect x="35" y="9" width="8.500" height="47.500" rx="2" /><rect x="46" y="22" width="8.500" height="34.500" rx="2" /></g></Tile>],
  [<Tile id="signal" a="#3446f0" b="#1c2ff2"><circle cx="33" cy="33" r="23.500" fill="none" stroke="#fff" strokeWidth="2.200" strokeDasharray="5.500 1.600" /><circle cx="33" cy="33" r="19.500" fill="#fff" /><path d="M12 57l3-13 9 9z" fill="#fff" /></Tile>, 1],
  [<Tile id="pages" a="#f6b14c" b="#ef8d36"><path d="M14 56h42" stroke="#fbd7a8" strokeWidth="2" /><path d="M49 12c3-1 6 1 4 5L22 51l-10 5 3-10z" fill="#f7f5f2" /><path d="M20 43l4 5" stroke="#999" strokeWidth="1.200" /></Tile>],
  [<Tile id="excel" a="#ffffff"><rect x="17" y="11" width="37" height="43" rx="2" fill="#3f9d62" /><rect x="35" y="11" width="19" height="22" fill="#5fc389" /><rect x="35" y="33" width="19" height="10" fill="#2f7f4c" /><rect x="17" y="43" width="37" height="11" fill="#245c38" /><OfficeLetter c="#2a7545" t="X" /></Tile>, 1],
  [<Tile id="store" a="#4fb0ee" b="#2a5fd8"><g stroke="#fff" strokeWidth="4.600" strokeLinecap="round"><path d="M36.500 13L20 43M29.500 13L47 45" /><path d="M11 40h17M38 40h17" /><path d="M16.500 48l-2 3.500M49.500 48l1.500 3" /></g></Tile>],
  [<Tile id="settings" a="#d5dde2" b="#8e8e8b"><circle cx="33" cy="33" r="26.500" fill="#3c3e40" />{gear.map((a) => <path key={a} d="M33 4.500v4" stroke="#3c3e40" strokeWidth="2.400" transform={`rotate(${a} 33 33)`} />)}<circle cx="33" cy="33" r="22" fill="none" stroke="#9a9da0" strokeWidth="2" /><circle cx="33" cy="33" r="17" fill="none" stroke="#aeb1b4" strokeWidth="3.500" /><path d="M33 33h17M33 33l-8.500 15M33 33l-8.500-15" stroke="#aeb1b4" strokeWidth="3.500" /><circle cx="33" cy="33" r="4.500" fill="#6a6d70" stroke="#aeb1b4" strokeWidth="2" /></Tile>, 0, "1"],
  "sep",
  [<Tile id="teams" a="#ffffff"><circle cx="34" cy="17" r="6.500" fill="#7b83eb" /><circle cx="48.500" cy="19.500" r="5" fill="#5059c9" /><path d="M38 27h18v14a7.500 7.500 0 0 1-14 4z" fill="#5059c9" /><path d="M20 27h25v15a12 12 0 0 1-22 6z" fill="#7b83eb" /><rect x="8" y="21" width="25" height="25" rx="2.500" fill="#464eb8" /><text x="20.500" y="40" textAnchor="middle" fontFamily="Open Sans" fontWeight="700" fontSize="17" fill="#fff">T</text></Tile>, 1],
  [<Tile id="outlook" a="#ffffff"><rect x="20" y="11" width="33" height="43" rx="2" fill="#1e90df" /><rect x="20" y="11" width="33" height="9" fill="#1253a3" /><rect x="42" y="17" width="11" height="11" fill="#50d1f8" /><path d="M18 54V36l20 10 16-10v16a2 2 0 0 1-2 2z" fill="#4fb3ec" /><OfficeLetter c="#1f5fc0" t="O" /></Tile>, 1],
  [<Tile id="ppt" a="#ffffff"><circle cx="35" cy="33" r="22" fill="#c9502f" /><path d="M35 11a22 22 0 0 1 22 22H35z" fill="#f0906f" /><path d="M35 11a22 22 0 0 0-22 22h22z" fill="#e0694a" /><rect x="8" y="20" width="25" height="25" rx="2.500" fill="#bd3f20" /><text x="20.500" y="39" textAnchor="middle" fontFamily="Open Sans" fontWeight="700" fontSize="17" fill="#fff">P</text></Tile>, 1],
  [<Tile id="word" a="#ffffff"><rect x="17" y="11" width="37" height="43" rx="2" fill="#2b6fcb" /><rect x="17" y="11" width="37" height="11" fill="#5aa2ea" /><rect x="17" y="33" width="37" height="11" fill="#2052b0" /><rect x="17" y="43" width="37" height="11" fill="#173a85" /><OfficeLetter c="#2050b0" t="W" /></Tile>, 1],
  [<Tile id="chrome" a="#f8f7f5" b="#efeeea"><circle cx="33" cy="33" r="28.500" fill="#e8bd3c" /><path d="M33 18.700h24.700A28.500 28.500 0 0 0 8.300 18.700l12.300 21.500z" fill="#d64a3b" /><path d="M8.300 18.700A28.500 28.500 0 0 0 33 61.500l12.400-21.400H20.600z" fill="#4a9e50" /><circle cx="33" cy="33" r="14" fill="#fff" /><circle cx="33" cy="33" r="11" fill="#4279e8" /></Tile>, 1],
  "sep2",
  [<svg width="66" height="74" viewBox="0 0 66 74"><path d="M6 0h35l19 17v54H6z" fill="#f7f7f6" /><path d="M41 0l19 19c-6-2-13-2-15-2 0-6-1-12-4-17z" fill="#cfcfce" /><rect x="17" y="27" width="33" height="34" rx="2" fill="#a9b4b8" /><circle cx="33.500" cy="43" r="12" fill="#b9c3c6" stroke="#93a0a5" strokeWidth="1" /><path d="M24 28.500h18v4H24zM19 55h29v5H19z" fill="#42474a" /></svg>],
  [<svg width="66" height="76" viewBox="0 0 66 76"><path d="M4 6l8 62c.6 4.500 5 6.500 21 6.500S53.400 72.500 54 68l8-62z" fill="#dcdedd" /><path d="M14 24l6 44M27 26l2 46M40 26l-2 46M52 24l-6 44" stroke="#d3d5d4" strokeWidth="2" /><ellipse cx="33" cy="8" rx="29" ry="7.500" fill="#a6a8a7" /><path d="M9 9l5-8 8 5 7-8 8 7 8-7 5 7 7-2-3 9c-12 4-34 4-45-3z" fill="#eceeed" /><path d="M16 6l6 5M30 2l5 9M44 3l-4 8" stroke="#555" strokeWidth="2" /><path d="M35 10l3 3" stroke="#f06a54" strokeWidth="2" /></svg>],
];

export default function App() {
  return (
    <>
      <Global />
      <Desktop>
        <MenuBar>
          <Slot $w={67}><Apple /></Slot>
          <Slot $w={142}><MenuText $bold $ls={-0.2}>Chrome</MenuText></Slot>
          {[["File", 84], ["Edit", 89], ["View", 100], ["History", 127], ["Bookmarks", 176], ["Profiles", 133], ["Tab", 84], ["Window", 137], ["Help", 80]].map(([t, w]) => (
            <Slot key={t} $w={w}><MenuText $ls={-0.5}>{t}</MenuText></Slot>
          ))}
          <MenuSpacer />
          <Slot $w={70}>
            <svg width="32" height="32" viewBox="-16 -16 32 32">
              {Array.from({ length: 12 }, (_, i) => <path key={i} d="M0-6.500V-14" stroke="#1d1d1b" strokeWidth="3.600" strokeLinecap="round" transform={`rotate(${i * 30})`} />)}
              <circle r="6" fill="none" stroke="#1d1d1b" strokeWidth="2" />
            </svg>
          </Slot>
          <Slot $w={71}>
            <svg width="32" height="32" viewBox="0 0 32 32"><path d="M7 5V1.200h22.500V16M5 26v4.800h26V15L18.500 24M18.500 22l12.500 8" fill="none" stroke="#111" strokeWidth="2.400" /><path d="M23 5h4v8h-4z" fill="none" stroke="#111" strokeWidth="2" /><rect x="0" y="6" width="20" height="20" rx="1.500" fill="#111" /><circle cx="10" cy="16" r="4.600" fill="none" stroke="#e7e5df" strokeWidth="2.600" /></svg>
          </Slot>
          <Slot $w={73}>
            <svg width="38" height="32" viewBox="0 0 38 32"><g fill="none" stroke="#1d1d1b" strokeWidth="2.200"><circle cx="16" cy="6" r="4.500" /><circle cx="25" cy="7" r="3.300" /><path d="M19 12h11v4M9 25c2 6 9 6 12 3" /></g><rect y="8" width="17" height="17" rx="2" fill="#1d1d1b" /><path d="M4.500 12.500h8M8.500 12.500v8.500" stroke="#e7e5df" strokeWidth="2.300" /><circle cx="29" cy="22" r="8.500" fill="#4aa32f" /><path d="M25 22l3 3 5-5.500" fill="none" stroke="#fff" strokeWidth="2.200" /></svg>
          </Slot>
          <Slot $w={64}>
            <svg width="28" height="28" viewBox="0 0 28 28"><circle cx="14" cy="14" r="12.600" fill="none" stroke="#1d1d1b" strokeWidth="2.400" /><path d="M10.500 8.500l9.500 5.500-9.500 5.500z" fill="#1d1d1b" /></svg>
          </Slot>
          <Slot $w={89}>
            <svg width="51" height="24" viewBox="0 0 51 24"><rect x="1" y="1" width="44" height="22" rx="7" fill="none" stroke="#8d8c88" strokeWidth="2" /><rect x="4" y="4" width="37" height="16" rx="4.500" fill="#1d1d1b" /><path d="M47.500 8.500c3 1 3 6 0 7z" fill="#8d8c88" /></svg>
          </Slot>
          <Slot $w={72}>
            <svg width="34" height="26" viewBox="0 0 34 26" fill="none" stroke="#1d1d1b" strokeWidth="4.200"><path d="M1.500 9.500a22 22 0 0 1 31 0" /><path d="M7.200 15.500a14 14 0 0 1 19.600 0" /><path d="M17 25.500l-5-5.200a7.200 7.200 0 0 1 10 0z" fill="#1d1d1b" stroke="none" /></svg>
          </Slot>
          <Slot $w={67}><St s={28} c="#1d1d1b" w={2.6} vb="0 0 28 28"><circle cx="11.500" cy="11.500" r="9.500" /><path d="M18.500 18.500l7.500 7.500" /></St></Slot>
          <Slot $w={64}>
            <svg width="28" height="28" viewBox="0 0 28 28"><rect x="1.200" y="1.200" width="25.600" height="11" rx="5.500" fill="none" stroke="#1d1d1b" strokeWidth="2.200" /><circle cx="7" cy="6.700" r="3.600" fill="#1d1d1b" /><rect y="15" width="28" height="13" rx="6.500" fill="#1d1d1b" /><circle cx="21" cy="21.500" r="3.900" fill="#e6e3dc" /></svg>
          </Slot>
          <Slot $w={122}><MenuText $color="#262624" $ls={-0.1}>Fri Feb 7</MenuText></Slot>
          <Slot $w={130}><MenuText $color="#262624" $ls={0.1} $ws={-3}>2:15 PM</MenuText></Slot>
        </MenuBar>

        <Window>
          <TabStrip>
            <Lights><Light $c="#ec6a5e" $b="#d85a50" /><Light $c="#f4bf4f" $b="#dca83f" /><Light $c="#61c554" $b="#52ae45" /></Lights>
            {tabs.map((t, i) => (
              <TabCell key={t.t} $w={t.w || 316}>
                <TabBody $active={t.active}>
                  {t.icon}
                  <TabTitle $fade={t.fade} $active={t.active} $ls={t.ls}>{t.t}</TabTitle>
                  <Cross />
                </TabBody>
                <TabSep $hide={i === 4 || i === 5} />
              </TabCell>
            ))}
            <PlusCell><St s={24} c="#3c3f43" w={2.6} vb="0 0 24 24"><path d="M12 2.500v19M2.500 12h19" /></St></PlusCell>
            <TabSearch><St s={20} c="#1f1f1f" w={2.8} vb="0 0 20 20"><path d="M3.500 6.500L10 13l6.500-6.500" /></St></TabSearch>
          </TabStrip>
          <Toolbar>
            <Slot $w={72}><St c="#45474a" w={2.6} vb="0 0 32 32"><path d="M27 16H6M16 5.500L5.500 16 16 26.500" /></St></Slot>
            <Slot $w={72}><St c="#a9abae" w={2.6} vb="0 0 32 32"><path d="M5 16h21M16 5.500L26.500 16 16 26.500" /></St></Slot>
            <Slot $w={68}><St c="#45474a" w={2.8} vb="0 0 32 32"><path d="M26.500 16.500A10.500 10.500 0 1 1 23 8.500L26.500 12M27 5v7.500h-7.500" /></St></Slot>
            <UrlPill>
              <SiteInfo><St s={28} c="#333538" w={2.7} vb="0 0 28 28"><circle cx="6.500" cy="7.500" r="3.300" /><path d="M14.500 7.500h10M3.500 20.500h10" /><circle cx="21.500" cy="20.500" r="3.300" /></St></SiteInfo>
              <UrlText $ls={-0.05}><b>businessprocessautomation.usw-16.palantirfoundry.com</b>/workspace/data-integration/builder/ri.eddie.main.pipeline.23ba4523-19a1-4ae5-ab08-855b8007482e/sandbox/...</UrlText>
              <St c="#45474a" w={2.5} vb="0 0 32 32"><path d="M16 3.500l3.700 8.400 9.100.8-6.900 6 2.100 8.900-8-4.700-8 4.700 2.100-8.900-6.900-6 9.100-.8z" /></St>
            </UrlPill>
            <Slot $w={105} $center>
              <St s={36} c="#45474a" w={2.8} vb="0 0 36 36"><path d="M5 9.500h8.500c-1-5.500 6.500-5.500 5.500 0H27a2 2 0 0 1 2 2v6.500c5-1 5 6 0 5V29a2 2 0 0 1-2 2H7a2 2 0 0 1-2-2v-5c4-1 4-8 0-9z" /></St>
            </Slot>
            <BarSep $w={3} $h={32} $c="#cfdffb" />
            <Slot $w={32} />
            <Avatar $bg="#b12a5b" $fg="#fff" $size={21} $ff={MAC}>J</Avatar>
            <Slot $w={36} />
            <Ic c="#45474a" s={32} vb="0 0 32 32"><circle cx="16" cy="5.500" r="2.900" /><circle cx="16" cy="16" r="2.900" /><circle cx="16" cy="26.500" r="2.900" /></Ic>
          </Toolbar>

          <Shell>
            <LeftRail>
              <RailGroup $line $pad="0">
                <RailItem $h={100}><Ic c="#abb3bf"><rect x="0" y="2" width="11" height="2" rx="1" /><rect x="0" y="7" width="11" height="2" rx="1" /><rect x="0" y="12" width="11" height="2" rx="1" /><path d="M12.500 5l3.300 2.700c.2.200.2.500 0 .7L12.500 11z" /></Ic></RailItem>
              </RailGroup>
              <RailGroup $line>
                <RailItem><Ic c="#abb3bf"><path d="M8 3.600L2 9.200V15c0 .55.45 1 1 1h3v-5h4v5h3c.55 0 1-.45 1-1V9.200zM15.700 7.300L14 5.700V2c0-.55-.45-1-1-1s-1 .45-1 1v1.800L8.700.3a1 1 0 0 0-1.400 0l-7 7a1 1 0 0 0 1.400 1.400L8 2.400l6.300 6.300a1 1 0 0 0 1.400-1.400z" /></Ic></RailItem>
                <RailItem><SearchIcon c="#abb3bf" /></RailItem>
                <RailItem><Ic c="#abb3bf"><path d="M8 16c1.100 0 2-.7 2-1.800H6C6 15.300 6.900 16 8 16zM14 12c-.9 0-1.700-.8-1.700-1.700V6.500c0-2-1.300-3.800-3.100-4.300V1.200a1.200 1.200 0 0 0-2.400 0v1c-1.800.5-3.100 2.300-3.100 4.300v3.800c0 .9-.8 1.700-1.700 1.700a.7.700 0 0 0 0 1.400h12a.7.700 0 0 0 0-1.400z" /></Ic></RailItem>
              </RailGroup>
              <RailGroup $line>
                <RailItem><St c="#abb3bf" w={2}><path d="M2.300 5.200A7 7 0 1 1 1.200 9M1.200 1.500v4h4M8 4.500V8.500l2 2.500" /></St></RailItem>
                <RailItem><Folder c="#abb3bf" /></RailItem>
                <RailItem><Ic c="#abb3bf">{[2, 8, 14].map((y) => [2, 8, 14].map((x) => <circle key={`${x}${y}`} cx={x} cy={y} r="2" />))}</Ic></RailItem>
              </RailGroup>
              <RailGroup $line $grow>
                <RailItem $active $h={72} $mb={18}><ActiveTile><Pipeline s={32} /></ActiveTile></RailItem>
                <RailItem>
                  <svg width="42" height="42" viewBox="-5 0 42 42">
                    <path transform="translate(0 8) scale(2)" fill="#abb3bf" d="M0 12.300V3c0-.55.45-1 1-1h4c.3 0 .6.1.8.3L7.200 4H13c.55 0 1 .45 1 1v.5H4.200c-.8 0-1.500.5-1.800 1.200L0 12.300zM15 6.500H4.500c-.5 0-.9.300-1 .7L1.200 13c-.1.600.3 1 .9 1h10.900c.500 0 .900-.300 1-.700l2-5.600c.100-.600-.400-1.200-1-1.200z" />
                    <path transform="translate(17 1)" d="M10 0l2.800 6.400 7 .6-5.300 4.700L16 18.500l-6-3.600-6 3.600 1.500-6.800L.2 7l7-.6z" fill="#5f6b7c" stroke="#252a31" strokeWidth="1" />
                  </svg>
                </RailItem>
              </RailGroup>
              <RailGroup $pad="19px 0 21px">
                <RailItem><Aip dark /></RailItem>
                <RailItem><HelpBadge>?</HelpBadge></RailItem>
                <RailItem><Avatar $bg="#28344b" $fg="#8abbff" $size={21} $weight={500} $ff={UI} $lift={1}>JL</Avatar></RailItem>
              </RailGroup>
            </LeftRail>

            <Content>
              <AppHeader>
                <AppLogo><Pipeline /></AppLogo>
                <TitleBlock>
                  <TitleRow>
                    <Slot $w={44}>
                      <svg width="32" height="28" viewBox="0 0 32 28" fill="none"><path d="M1 7.500L4.500 1h23L31 7.500V25a2 2 0 0 1-2 2H3a2 2 0 0 1-2-2z" stroke="#858a92" strokeWidth="2" fill="#f4f5f7" /><path d="M1 7.500h30" stroke="#858a92" strokeWidth="2" /><path d="M9 14.500v1c0 1 .5 1.500 1.500 1.500h11c1 0 1.500-.5 1.500-1.500v-1" stroke="#4b6387" strokeWidth="2" /></svg>
                    </Slot>
                    <Slot $w={220}><Label $color="#5f6b7c" $size={25}>2025 Baseball S…</Label></Slot>
                    <Slot $w={40}><St c="#abb3bf" s={26} w={1.9}><path d="M5 2.500L10 8l-5 5.500" /></St></Slot>
                    <Slot $w={207}><Label $weight={700} $size={24.5}>2025_Combined</Label></Slot>
                    <St w={1.5}><path d="M8 1.500l1.900 4.300 4.600.5-3.400 3.100.9 4.600L8 11.700 4 14l.9-4.600-3.400-3.100 4.600-.5z" /></St>
                  </TitleRow>
                  <TitleRow $pl={4}>
                    <Slot $w={51}><Label $color="#5f6b7c" $size={25}>File</Label></Slot>
                    <Slot $w={57}><Caret small /></Slot>
                    <Slot $w={104}><Label $color="#5f6b7c" $size={25}>Settings</Label></Slot>
                    <Slot $w={57}><Caret small /></Slot>
                    <Slot $w={65}><Label $color="#5f6b7c" $size={25}>Help</Label></Slot>
                    <Slot $w={55}><Caret small /></Slot>
                    <BarSep />
                    <Slot $w={21} />
                    <Slot $w={32}>
                      <svg width="25" height="25" viewBox="0 0 13 13"><path d="M0 13V1.500C0 .7.500 0 1.500 0h6.500c1 0 1.500.7 1.500 1.500V3h2c.9 0 1.500.6 1.500 1.500V13H8.300v-2.500H5V13z" fill="#404854" /><path d="M1.800 1.800h2.200v1.600H1.800zM5.500 1.800h2.200v1.600H5.500zM1.800 4.900h2.200v1.600H1.800zM5.500 4.900h2.200v1.600H5.500zM9.500 4.900h1.800v1.600H9.500zM1.800 8h2.200v1.600H1.800zM5.500 8h2.200v1.600H5.500zM9.500 8h1.800v1.600H9.500z" fill="#fff" /></svg>
                    </Slot>
                    <Slot $w={35}><Label $color="#404854" $size={22}>1</Label></Slot>
                    <BarSep />
                    <Slot $w={13} />
                    <Batch><Label $color="#fff" $size={23} $ls={-0.1}>Batch</Label></Batch>
                    <Slot $w={66} $center>
                      <svg width="24" height="26" viewBox="0 0 24 26"><path d="M2.300 17.500C-.5 15 .1 11.300 3 10c.2-4.500 3.500-7.500 7.700-7.500 4 0 7 2.500 7.800 6.200 2.300.8 3.600 2 4 3.800l-3-.5-6.500 6.500-2.500-2-4.500 3c-1.300-.2-2.700-.9-3.700-2z" fill="#5f6b7c" /><path d="M11.500 20l3.500 4 7-8" fill="none" stroke="#5f6b7c" strokeWidth="2.800" strokeLinecap="round" strokeLinejoin="round" /></svg>
                    </Slot>
                  </TitleRow>
                </TitleBlock>
                <NavTabs>
                  <NavTab $active $w={72}><Label $color="#2d57a8" $size={25}>Graph</Label></NavTab>
                  <NavTab $w={115}><Label $size={25}>Proposals</Label></NavTab>
                  <NavTab $w={84}><Label $size={25}>History</Label></NavTab>
                </NavTabs>
                <HeaderActions>
                  <Slot $w={58}><St c="#a5aebb" w={1.9}><path d="M4.500 1.800L1.500 5l3 3.200M2 5h8.500a4.500 4.500 0 0 1 0 9H8" /><circle cx="4" cy="14" r="1.200" fill="#a5aebb" /></St></Slot>
                  <Slot $w={66}><St c="#a5aebb" w={1.9}><path d="M11.500 1.800l3 3.200-3 3.200M14 5H5.500a4.500 4.500 0 0 0 0 9H8" /><circle cx="12" cy="14" r="1.200" fill="#a5aebb" /></St></Slot>
                  <Group>
                    <OutlineButton $w={192} $pl={20} $c="#cdcfd3" $r="4px 0 0 4px">
                      <Slot $w={46}><Branch /></Slot>
                      <Slot $w={71}><Label $size={24.5}>Main</Label></Slot>
                      <Caret />
                    </OutlineButton>
                    <OutlineButton $w={59} $joined $c="#cdcfd3" $r="0 4px 4px 0"><Ic><circle cx="2" cy="8" r="2" /><circle cx="8" cy="8" r="2" /><circle cx="14" cy="8" r="2" /></Ic></OutlineButton>
                  </Group>
                  <Group>
                    <OutlineButton $w={146} $pl={20} $c="#76a184" $r="4px 0 0 4px">
                      <Slot $w={45}><Ic c="#32694a"><circle cx="8" cy="8" r="8" /><path d="M8 12.500v-8M4.700 7.400L8 4.100l3.300 3.300" stroke="#fff" strokeWidth="2" fill="none" strokeLinecap="round" strokeLinejoin="round" /></Ic></Slot>
                      <Label $color="#32694a" $size={24.5}>Save</Label>
                    </OutlineButton>
                    <OutlineButton $w={185} $pl={19} $joined $c="#d3dcec" $r="0 4px 4px 0">
                      <Slot $w={47}><Merge c="#9db3dc" /></Slot>
                      <Label $color="#9db3dc" $size={24.8}>Propose</Label>
                    </OutlineButton>
                  </Group>
                  <Group>
                    <OutlineButton $w={125} $c="#7c99d0" $r="4px 0 0 4px"><Label $color="#2d57a8" $size={24.5}>Deploy</Label></OutlineButton>
                    <OutlineButton $w={58} $joined $c="#7c99d0" $r="0 4px 4px 0"><Sliders c="#2d57a8" /></OutlineButton>
                  </Group>
                  <StatusButton><StatusTag>
                    <St s={24} c="#32694a" w={2.4}><path d="M1.500 9l4 4.500L14.500 2.500" /></St>
                    <Label $color="#32694a" $size={21.5}>8</Label>
                  </StatusTag></StatusButton>
                  <Slot $w={20} />
                  <BarSep $h={40} />
                  <Slot $w={40} />
                  <Slot $w={47}><Ic><path d="M0 13.500c.2-1.500 1-1.800 3-2.600 1-.4 1-.7.9-1.500-.6-.6-.9-1.500-1.100-2.400-.9-.4-.8-1.800-.3-2.200C2.300 2.500 4 1 6 1s3.500 1.500 3.400 3.800c.5.4.5 1.800-.3 2.200-.2.900-.5 1.800-1 2.400-.2.800 0 1.100.9 1.500 2 .8 2.800 1.100 3 2.600v.5H0z" /><path d="M10 2c2.300.1 3.500 1.600 3.300 3.300.4.400.4 1.500-.3 1.900-.2.700-.4 1.400-.8 1.900-.1.700 0 1 .8 1.400 1.700.7 2.800 1.100 3 2.500h-2.700c-.5-1.500-1.600-1.900-3-2.500.6-.8 1-1.700 1.200-2.500.8-.8.8-2 .3-2.800 0-1.200-.6-2.400-1.800-3.200z" /></Ic></Slot>
                  <Slot $w={113}><Label $size={24.5}>Share</Label></Slot>
                  <Ic><circle cx="2" cy="2" r="2" /><circle cx="2" cy="8" r="2" /><circle cx="2" cy="14" r="2" /><rect x="5.500" y="1" width="10.500" height="2" rx="1" /><rect x="5.500" y="7" width="10.500" height="2" rx="1" /><rect x="5.500" y="13" width="10.500" height="2" rx="1" /></Ic>
                </HeaderActions>
              </AppHeader>

              <WorkArea>
                <Main>
                  <Canvas>
                    <GraphView />
                    <CanvasBar>
                      <ToolGroup $w={118}>
                        <ToolButtons>
                          <ToolButton $r="4px 0 0 4px"><St w={1.9}><path d="M8 1v14M1 8h14M6 2.800L8 1l2 1.800M6 13.200L8 15l2-1.800M2.800 6L1 8l1.800 2M13.200 6L15 8l-1.800 2" /></St></ToolButton>
                          <ToolButton $join $pressed $r="0 4px 4px 0"><Ic><path d="M0 0h2.500v1H7.800v5H9l-1.200 2-1-.5H1V2.500H0zM3 3v3h3V3z" fillRule="evenodd" /><path d="M7.500 7.300l8.300 3.200-2.700 1.400 3 3-1.200 1.200-3-3-1.600 2.600z" /></Ic></ToolButton>
                        </ToolButtons>
                        <Label $size={21.5} $color="#8f99a8">Tools</Label>
                      </ToolGroup>
                      <ToolGroup $w={60}>
                        <ToolButtons><ToolButton><St w={2}><circle cx="8" cy="8" r="7" /><circle cx="8" cy="8" r="2" fill="#5f6b7c" /></St></ToolButton></ToolButtons>
                        <Label $size={21.5} $color="#8f99a8">Select</Label>
                      </ToolGroup>
                      <ToolGroup $w={60}>
                        <ToolButtons><ToolButton $off><Ic c="#959daa"><path d="M7.500.3A8 8 0 1 0 16 9h-4.500L7.500 7.500z" /><path d="M10.500 1.200l4.500 4.500M15 1.200l-4.500 4.500" stroke="#dfe2e7" strokeWidth="4.600" /><path d="M10.500 1.200l4.500 4.500M15 1.200l-4.500 4.500" stroke="#959daa" strokeWidth="1.900" strokeLinecap="round" /></Ic></ToolButton></ToolButtons>
                        <Label $size={21.5} $color="#8f99a8">Remove</Label>
                      </ToolGroup>
                      <ToolGroup $w={118}>
                        <ToolButtons>
                          <ToolButton $r="4px 0 0 4px"><Ic><circle cx="2" cy="2" r="2" /><circle cx="2" cy="8" r="2" /><circle cx="2" cy="14" r="2" /><circle cx="8" cy="5" r="2" /><circle cx="8" cy="11" r="2" /><circle cx="14" cy="8" r="2" /></Ic></ToolButton>
                          <ToolButton $join $r="0 4px 4px 0"><St w={1.9}><path d="M3 1v14M8 1v14M13 1v14M1 3h14M1 8h14M1 13h14" /></St></ToolButton>
                        </ToolButtons>
                        <Label $size={21.5} $color="#8f99a8">Layout</Label>
                      </ToolGroup>
                      <BarSep $h={60} $c="#dcdfe4" />
                      <Slot $w={28} />
                      <ToolButton $w={236} $pl={18}>
                        <Slot $w={46}><St w={2}><path d="M8 1v9.500M4.300 7L8 10.700 11.700 7M1 12v3h14v-3" /></St></Slot>
                        <Slot $w={118}><Label $size={24.8}>Add data</Label></Slot>
                        <Caret />
                      </ToolButton>
                      <Slot $w={30} />
                      <ToolButton $w={250} $pl={18}>
                        <Slot $w={47}><FxGlyph>fx</FxGlyph></Slot>
                        <Slot $w={132}><Label $size={24.8}>Reusables</Label></Slot>
                        <Caret />
                      </ToolButton>
                      <Slot $w={31} />
                      <ToolGroup $w={176}>
                        <ToolButtons>
                          <ToolButton $off $w={59} $r="4px 0 0 4px"><TransformIcon /></ToolButton>
                          <ToolButton $off $offJoin $w={58} $r="0"><Ic c="#559fd3"><path d="M1.500 1h8.500c.5 0 1 .4 1 1v3H15c.5 0 1 .5 1 1v8c0 .6-.5 1-1 1H6c-.5 0-1-.4-1-1v-3H1c-.5 0-1-.4-1-1V2c0-.6.5-1 1-1z" /><path d="M1.800 4h1.700v2.300H1.800zM5 4h4.500v1H5zM1.800 7.600h1.700V9.500H1.800zM6 8.200h2.500v2H6zM10 8.200h4.300v2H10zM6 11.600h2.500v2H6zM10 11.600h4.300v2H10zM5 5.500h4.500v1.300H5z" fill="#dfe2e7" /></Ic></ToolButton>
                          <ToolButton $off $offJoin $w={59} $r="0 4px 4px 0"><Ic c="#cd3563"><path d="M1 0h14c.5 0 1 .5 1 1v14c0 .5-.5 1-1 1H1c-.5 0-1-.5-1-1V1c0-.5.5-1 1-1zM2 2v2.500h12V2zM2 6v8h12V6z" fillRule="evenodd" /><path d="M7 7.500h2V9h1.800v2H9v1.800H7V11H5.200V9H7z" /></Ic></ToolButton>
                        </ToolButtons>
                        <Label $size={21.5} $color="#8f99a8">Transform</Label>
                      </ToolGroup>
                      <ToolGroup $w={176}>
                        <ToolButtons>
                          <ToolButton $off $w={60} $r="4px 0 0 4px"><Aip /></ToolButton>
                          <ToolButton $join $r="0"><Sparkle /></ToolButton>
                          <ToolButton $join $r="0 4px 4px 0"><Ic c="#7157d1"><path d="M8 0a4.800 4.800 0 0 1 4.900 4.900c0 1.500-.7 2.600-1.500 3.500-.6.700-.9 1.300-.9 1.900h-5c0-.6-.3-1.200-.9-1.900-.8-.9-1.500-2-1.500-3.500A4.800 4.800 0 0 1 8 0z" /><rect x="5.300" y="11" width="5.400" height="1.900" rx=".9" /><rect x="6" y="13.900" width="4" height="2.100" rx="1" /></Ic></ToolButton>
                        </ToolButtons>
                        <Label $size={21.5} $color="#8f99a8">AIP</Label>
                      </ToolGroup>
                      <ToolGroup $w={60}>
                        <ToolButtons><ToolButton $off><Ic c="#959daa" s={28}><path d="M1.500 11.500L11 2l3 3-9.500 9.500L.5 15.800zM12 1.200c.7-.8 1.300-1 2.300 0 .9.900.9 1.500.2 2.300l-.2.400L11.700 1.400z" /></Ic></ToolButton></ToolButtons>
                        <Label $size={21.5} $color="#8f99a8">Edit</Label>
                      </ToolGroup>
                      <MenuSpacer />
                      <ToolButton><SearchIcon /></ToolButton>
                      <Slot $w={20} />
                      <ToolButton $off><svg width="32" height="20" viewBox="0 0 32 20"><rect x="1" y="1" width="30" height="18" rx="8" fill="none" stroke="#959daa" strokeWidth="2" /><circle cx="10.500" cy="10" r="4" fill="#959daa" /><circle cx="21.500" cy="10" r="4" fill="#959daa" /></svg></ToolButton>
                      <Slot $w={20} />
                      <ToolButton $w={171} $pl={18}><Slot $w={99}><Label $size={24.8}>Legend</Label></Slot><Caret /></ToolButton>
                    </CanvasBar>
                    <ZoomStack>
                      <ZoomCell><St w={1.9}><circle cx="7" cy="7" r="6" /><path d="M7 4.200v5.600M4.200 7h5.600" /><path d="M11.500 11.500l3.200 3.200" strokeWidth="2.400" /></St></ZoomCell>
                      <ZoomCell><St w={1.9}><circle cx="7" cy="7" r="6" /><path d="M4.200 7h5.600" /><path d="M11.500 11.500l3.200 3.200" strokeWidth="2.400" /></St></ZoomCell>
                      <ZoomCell><St w={1.8}><path d="M1 4V1h3M12 1h3v3M15 12v3h-3M4 15H1v-3M6.300 4.300L8 2.400l1.700 1.900M6.300 11.700L8 13.600l1.700-1.900M4.300 6.300L2.400 8l1.900 1.700M11.700 6.300L13.600 8l-1.900 1.700" /></St></ZoomCell>
                    </ZoomStack>
                  </Canvas>
                  <BottomBar>
                    <BottomTab $w={290} $gap={10} $active>
                      <svg width="32" height="26" viewBox="0 0 32 26"><rect width="32" height="26" rx="3" fill="#2d57a8" /><path d="M4 4h6v18H4zM13 4h3v4h-3zM18 4h10v4H18zM13 11h3v4h-3zM18 11h10v4H18zM13 18h3v4h-3zM18 18h10v4H18z" fill="#c9d8f3" /></svg>
                      <Label $weight={700} $color="#2d57a8" $size={24.4}>Selection preview</Label>
                    </BottomTab>
                    <BottomTab $w={222} $gap={11}>
                      <Sparkle c="#6c58cc" />
                      <Label $weight={700} $color="#6c58cc" $size={24.4}>Suggestions</Label>
                    </BottomTab>
                    <Collapse><St s={24} w={3.4} vb="0 0 24 24"><path d="M4 12l8-8 8 8M4 21l8-8 8 8" /></St></Collapse>
                  </BottomBar>
                </Main>
                <Gutter />
                <RightRail>
                  <RightItem><St w={1.9}><path d="M11 2A7 7 0 1 0 11 14M5 8h9.500M12 5.200L15 8l-3 2.800" /></St></RightItem>
                  <RightItem><SearchIcon /></RightItem>
                  <RightItem><Folder /></RightItem>
                  <RightLine />
                  <RightItem><Ic><path d="M1 1.500h1.500a1.700 1.700 0 0 0 3.200 0h3.600a1.700 1.700 0 0 0 3.200 0H14c.6 0 1 .4 1 1V14c0 .6-.4 1-1 1H1c-.6 0-1-.4-1-1V2.500c0-.6.400-1 1-1zM2 6v3h3V6zM6 6v3h3V6zM10 6v3h3V6zM2 10v3h3v-3zM6 10v3h3v-3zM10 10v3h3v-3z" fillRule="evenodd" /><circle cx="4" cy="1.200" r="1.100" /><circle cx="11" cy="1.200" r="1.100" /></Ic></RightItem>
                  <RightItem><Sliders /></RightItem>
                  <RightItem><Ic><path d="M0 8.200l1-1 1 .3L7 1.500C8.500.3 10.500 0 12.800.8 11 1 9.700 2 8.700 3.500l-.3 1.700 1 1 6 6.300c1.200 1.500-.8 4-2.500 3.200L6.500 7.800l-2 .7-1 .7v1l-1 1z" /></Ic></RightItem>
                  <RightLine />
                  <RightItem><Ic><rect x="0" y="3" width="6" height="4.200" rx="1.200" /><rect x="0" y="8.800" width="6" height="4.200" rx="1.200" /><rect x="7" y="0" width="2" height="16" rx="1" /><g fill="none" stroke="#5f6b7c" strokeWidth="1"><rect x="10.500" y="3.500" width="5" height="3.200" rx=".8" /><rect x="10.500" y="9.300" width="5" height="3.200" rx=".8" /></g></Ic></RightItem>
                  <RightItem><St w={2}><path d="M1 4l1.800 1.800L6 2.200M10 4.200h5M10 12.200h5" /><rect x="1.200" y="10.500" width="3.800" height="3.800" rx=".5" /></St></RightItem>
                </RightRail>
              </WorkArea>
            </Content>
          </Shell>
        </Window>

        <DockBar>
          {dock.map((d, i) => {
            if (d === "sep") return <DockSep key={i} $ml={9} $mr={27} />;
            if (d === "sep2") return <DockSep key={i} $ml={10} $mr={26} />;
            return (
              <DockItem key={i}>
                {d[0]}
                {d[1] ? <DockDot /> : null}
                {d[2] ? <DockBadge>{d[2]}</DockBadge> : null}
              </DockItem>
            );
          })}
        </DockBar>
      </Desktop>
    </>
  );
}
